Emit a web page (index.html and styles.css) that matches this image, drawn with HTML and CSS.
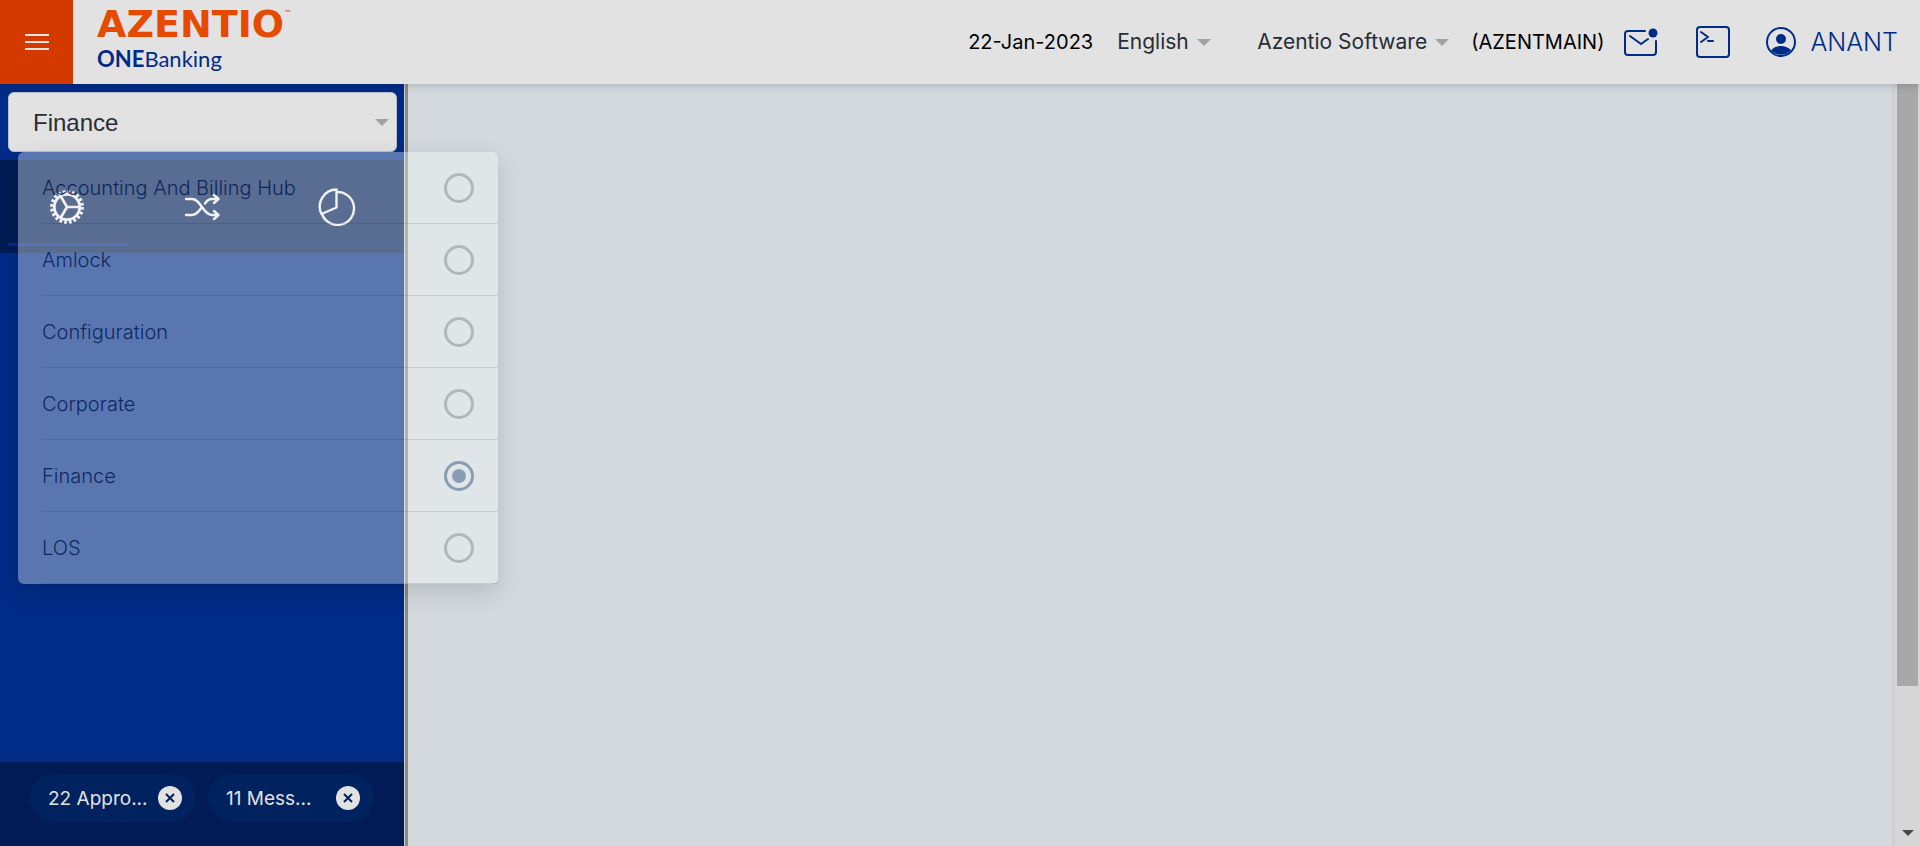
FILE: index.html
```html
<!DOCTYPE html>
<html lang="en">
<head>
<meta charset="utf-8">
<title>Azentio ONEBanking</title>
<link rel="stylesheet" href="styles.css">
</head>
<body>
<header class="topbar">
  <button class="menu-button" aria-label="Menu">
    <svg width="24" height="16" viewBox="0 0 24 16"><path d="M0 1h24M0 8h24M0 15h24" stroke="#e2e2e2" stroke-width="2"/></svg>
  </button>
  <a class="brand" href="#">
    <span class="brand-name">AZENTIO<sup class="brand-mark">™</sup></span>
    <span class="brand-product"><b>ONE</b>Banking</span>
  </a>
  <div class="tools">
    <span class="date">22-Jan-2023</span>
    <label class="picker picker-language">
      <select class="picker-select" aria-label="Language"><option>English</option></select>
      <svg class="caret" width="14" height="7" viewBox="0 0 14 7"><path d="M0 0h14L7 7z" fill="#a0a2a4"/></svg>
    </label>
    <label class="picker">
      <select class="picker-select" aria-label="Company"><option>Azentio Software</option></select>
      <svg class="caret" width="14" height="7" viewBox="0 0 14 7"><path d="M0 0h14L7 7z" fill="#a0a2a4"/></svg>
    </label>
    <span class="branch">(AZENTMAIN)</span>
    <button class="icon-button mail" aria-label="Mail">
      <svg width="34" height="30" viewBox="0 0 34 30" fill="none" stroke="#002b87" stroke-width="2" stroke-linecap="round" stroke-linejoin="round"><path d="M21 4H4a3 3 0 0 0-3 3v18a3 3 0 0 0 3 3h25a3 3 0 0 0 3-3V14"/><path d="M6 9l11 8 7-5"/><circle cx="29" cy="6" r="4.500" fill="#002b87" stroke="none"/></svg>
    </button>
    <button class="icon-button terminal" aria-label="Terminal">
      <svg width="34" height="32" viewBox="0 0 34 32" fill="none" stroke="#002b87" stroke-width="2" stroke-linecap="round" stroke-linejoin="round"><rect x="1" y="1" width="32" height="30" rx="3"/><path d="M5 6l7 5-7 5M12 15h5"/></svg>
    </button>
    <button class="user">
      <svg width="30" height="30" viewBox="0 0 30 30"><circle cx="15" cy="15" r="14" fill="none" stroke="#002b87" stroke-width="2"/><circle cx="15" cy="12" r="5" fill="#002b87"/><path d="M5 23.500C7 20.500 11 19 15 19s8 1.500 10 4.500A14 14 0 0 1 5 23.500z" fill="#002b87"/></svg>
      <span>ANANT</span>
    </button>
  </div>
</header>
<div class="workspace">
  <nav class="sidebar">
    <div class="module">
      <select class="module-select" aria-label="Module"><option>Finance</option></select>
      <svg class="module-caret" width="14" height="7" viewBox="0 0 14 7"><path d="M0 0h14L7 7z" fill="#a0a2a4"/></svg>
      <div class="popover">
        <label class="option"><span>Accounting And Billing Hub</span><input class="radio" type="radio" name="module"></label>
        <label class="option"><span>Amlock</span><input class="radio" type="radio" name="module"></label>
        <label class="option"><span>Configuration</span><input class="radio" type="radio" name="module"></label>
        <label class="option"><span>Corporate</span><input class="radio" type="radio" name="module"></label>
        <label class="option"><span>Finance</span><input class="radio" type="radio" name="module" checked></label>
        <label class="option"><span>LOS</span><input class="radio" type="radio" name="module"></label>
      </div>
    </div>
    <div class="tabs">
      <button class="tab tab-active" aria-label="Settings">
        <svg width="36" height="36" viewBox="0 0 36 36" fill="none" stroke="#ececec"><circle cx="18" cy="18" r="15.200" stroke-width="3.500" stroke-dasharray="2.700 2.075"/><circle cx="18" cy="18" r="12.700" stroke-width="2.800"/><path d="M18 18h12M18 18l-6.500-11M18 18l-6.500 11" stroke-width="2.600"/></svg>
      </button>
      <button class="tab" aria-label="Transfers">
        <svg width="36" height="36" viewBox="0 0 36 36" fill="none" stroke="#ececec" stroke-width="2.400" stroke-linecap="round" stroke-linejoin="round"><path d="M2 10h6c4 0 6.500 3 10 8s6 8 10 8h6M2 26h6c4 0 6.500-3 10-8M21 14.500c2-3 4-4.500 7-4.500h6M30 6l4.500 4-4.500 4M30 22l4.500 4-4.500 4"/></svg>
      </button>
      <button class="tab" aria-label="Reports">
        <svg width="38" height="38" viewBox="0 0 38 38" fill="none" stroke="#ececec" stroke-width="2.400" stroke-linejoin="round"><path d="M18.500 1.500A17 17 0 0 0 3.500 26l15-6.500z"/><path d="M18.500 4A16.500 16.500 0 1 1 4 26"/></svg>
      </button>
    </div>
    <div class="chips">
      <div class="chip">22 Appro...<button class="chip-close" aria-label="Dismiss approvals"><svg width="10" height="10" viewBox="0 0 10 10"><path d="M1 1l8 8M9 1L1 9" stroke="#001f5c" stroke-width="2"/></svg></button></div>
      <div class="chip">11 Mess...<button class="chip-close" aria-label="Dismiss messages"><svg width="10" height="10" viewBox="0 0 10 10"><path d="M1 1l8 8M9 1L1 9" stroke="#001f5c" stroke-width="2"/></svg></button></div>
    </div>
  </nav>
  <div class="divider"></div>
  <main class="content"></main>
  <div class="scrollbar">
    <div class="thumb"></div>
    <svg class="scroll-arrow" width="12" height="6" viewBox="0 0 12 6"><path d="M0 0h12L6 6z" fill="#484848"/></svg>
  </div>
</div>
</body>
</html>
```
FILE: styles.css
```css
* { box-sizing: border-box; }

body {
  display: flex;
  flex-direction: column;
  height: 100vh;
  margin: 0;
  overflow: hidden;
  font-family: Inter, "Liberation Sans", sans-serif;
  background: #d3d9dd;
}

button {
  display: flex;
  align-items: center;
  justify-content: center;
  padding: 0;
  border: 0;
  background: none;
  font: inherit;
  color: inherit;
}

svg { flex: none; }

.topbar {
  display: flex;
  flex: none;
  height: 84px;
  background: #e2e2e2;
  box-shadow: 0 2px 8px rgba(0, 0, 0, 0.16);
  z-index: 1;
}

.menu-button {
  width: 73px;
  background: #d43900;
}

.brand {
  display: flex;
  flex-direction: column;
  gap: 4px;
  padding: 6px 24px;
  color: #002b87;
  text-decoration: none;
}

.brand-name {
  display: flex;
  font: bold 38px/36px "DejaVu Sans", sans-serif;
  color: #e54a00;
}

.brand-mark {
  font-size: 8px;
  font-weight: normal;
  line-height: 16px;
}

.brand-product {
  font: 22px/26px Lato, sans-serif;
}

.tools {
  display: flex;
  flex: 1;
  align-items: center;
  justify-content: flex-end;
  padding-right: 22px;
  font-size: 20px;
  color: #000;
}

.picker {
  display: flex;
  align-items: center;
  gap: 8px;
  margin-left: 24px;
}

.picker-language { margin-right: 22px; }

.picker-select {
  padding: 0;
  border: 0;
  appearance: none;
  background: none;
  font: 21px/32px Inter, sans-serif;
  color: #272d35;
}

.branch { margin-left: 22px; }
.mail { margin-left: 20px; }
.terminal { margin-left: 38px; }

.user {
  gap: 14px;
  margin-left: 36px;
  font-size: 25px;
  font-weight: 300;
  color: #002b87;
}

.workspace {
  display: flex;
  flex: 1;
  min-height: 0;
}

.sidebar {
  display: flex;
  flex: none;
  flex-direction: column;
  width: 404px;
  background: #002b87;
}

.divider {
  flex: none;
  width: 4px;
  border-left: 1px solid #cfcfcf;
  background: #8c8b8b;
}

.module {
  position: relative;
  padding: 8px 7px 8px 8px;
}

.module-select {
  display: block;
  width: 100%;
  height: 60px;
  padding: 0 24px;
  border: 1px solid #b9c0cc;
  border-radius: 6px;
  appearance: none;
  background: #e2e2e2;
  font: 24px "Liberation Sans", Arial, sans-serif;
  color: #272d35;
}

.module-caret {
  position: absolute;
  top: 35px;
  right: 15px;
}

.popover {
  position: absolute;
  top: 68px;
  left: 18px;
  z-index: 2;
  width: 480px;
  padding-left: 24px;
  border-radius: 6px;
  background: rgba(248, 251, 251, 0.36);
  box-shadow: 0 8px 24px rgba(0, 0, 0, 0.14);
}

.option {
  display: flex;
  align-items: center;
  justify-content: space-between;
  height: 72px;
  padding-right: 24px;
  border-bottom: 1px solid rgba(0, 5, 50, 0.12);
  font-size: 20px;
  font-weight: 300;
  color: rgba(0, 22, 82, 0.85);
}

.radio {
  display: grid;
  place-items: center;
  width: 30px;
  height: 30px;
  margin: 0;
  border: 3px solid #b3b7b9;
  border-radius: 50%;
  appearance: none;
}

.radio:checked { border-color: #899db2; }

.radio:checked::before {
  content: "";
  width: 14px;
  height: 14px;
  border-radius: 50%;
  background: #899db2;
}

.tabs {
  display: flex;
  height: 93px;
  background: #001b55;
}

.tab { flex: 1; }

.tab-active {
  background: linear-gradient(#002b87, #002b87) 8px 83px / 120px 3px no-repeat;
}

.chips {
  display: flex;
  gap: 12px;
  height: 84px;
  margin-top: auto;
  padding: 12px 30px 24px;
  background: #001b55;
}

.chip {
  display: flex;
  flex: 1;
  align-items: center;
  justify-content: space-between;
  height: 48px;
  padding: 0 14px 0 18px;
  border-radius: 24px;
  background: #00225f;
  font-size: 19px;
  color: #e2e2e2;
  white-space: nowrap;
}

.chip-close {
  width: 24px;
  height: 24px;
  border-radius: 50%;
  background: #e2e2e2;
}

.content { flex: 1; }

.scrollbar {
  display: flex;
  flex: none;
  flex-direction: column;
  align-items: center;
  justify-content: space-between;
  width: 28px;
  padding: 0 2px 10px 2px;
  border-left: 3px solid #d0d0d0;
  background: #d6d6d6;
}

.thumb {
  width: 21px;
  height: 80%;
  background: #a8a8a8;
}
```
